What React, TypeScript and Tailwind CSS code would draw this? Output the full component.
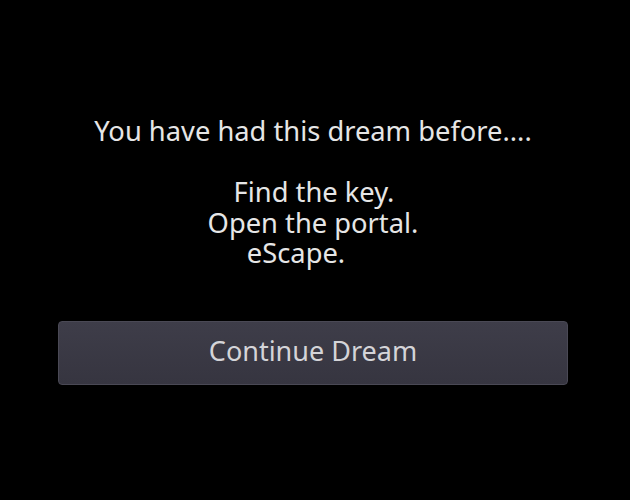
import React from "react";

export default function App() {
  return (
    <div
      className="w-[630px] h-[500px] bg-black overflow-hidden"
      style={{ fontFamily: '"Noto Sans", "Open Sans", sans-serif' }}
    >
      <div className="pt-[116px] flex flex-col items-center text-[27.3px] leading-[30.5px] text-[#e6e6e6]">
        <div className="ml-[-4px]">You have had this dream before....</div>
        <div className="h-[30.5px]"></div>
        <div className="ml-[-2px]">Find the key.</div>
        <div className="ml-[-4px]">Open the portal.</div>
        <div className="pr-[38px]">eScape.</div>
      </div>
      <div className="mt-[52px] ml-[58px] w-[510px] h-[64px] rounded-[4px] border border-[#4a4955] bg-gradient-to-b from-[#3e3d49] to-[#363540] flex items-center justify-center">
        <span className="text-[27px] leading-none text-[#d4d4d8] pb-[4px]">Continue Dream</span>
      </div>
    </div>
  );
}
